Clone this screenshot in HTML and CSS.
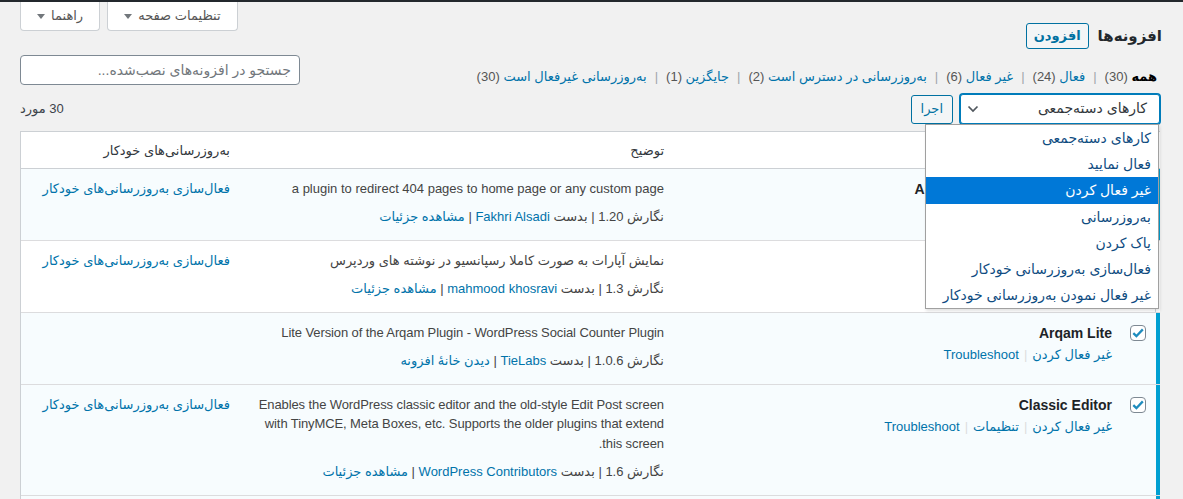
FILE: index.html
```html
<!DOCTYPE html>
<html lang="fa" dir="rtl">
<head>
<meta charset="utf-8">
<title>افزونه‌ها</title>
<link rel="stylesheet" href="styles.css">
</head>
<body>
<div class="adminbar"></div>
<div class="wrap">
  <div class="top">
    <div class="heading">
      <h1 class="title">افزونه‌ها</h1>
      <a class="page-title-action">افزودن</a>
    </div>
    <div class="screen-meta">
      <button class="meta-tab">تنظیمات صفحه <span class="caret"></span></button>
      <button class="meta-tab">راهنما <span class="caret"></span></button>
    </div>
  </div>

  <div class="filters">
    <ul class="subsubsub">
      <li><a class="current">همه <span class="count">(30)</span></a><span class="sep">|</span></li>
      <li><a>فعال <span class="count">(24)</span></a><span class="sep">|</span></li>
      <li><a>غیر فعال <span class="count">(6)</span></a><span class="sep">|</span></li>
      <li><a>به‌روزرسانی در دسترس است <span class="count">(2)</span></a><span class="sep">|</span></li>
      <li><a>جایگزین <span class="count">(1)</span></a><span class="sep">|</span></li>
      <li><a>به‌روزرسانی غیرفعال است <span class="count">(30)</span></a></li>
    </ul>
    <input class="search" type="search" placeholder="جستجو در افزونه‌های نصب‌شده...">
  </div>

  <div class="tablenav">
    <div class="bulk">
      <div class="select-wrap">
        <div class="select">
          <span>کارهای دسته‌جمعی</span>
          <svg class="chev" width="12" height="8" viewBox="0 0 12 8"><path d="M1.5 1.5 L6 6 L10.5 1.5" fill="none" stroke="#50575e" stroke-width="1.7"/></svg>
        </div>
        <ul class="options">
          <li>کارهای دسته‌جمعی</li>
          <li>فعال نمایید</li>
          <li class="hl">غیر فعال کردن</li>
          <li>به‌روزرسانی</li>
          <li>پاک کردن</li>
          <li>فعال‌سازی به‌روزرسانی خودکار</li>
          <li>غیر فعال نمودن به‌روزرسانی خودکار</li>
        </ul>
      </div>
      <button class="apply">اجرا</button>
    </div>
    <div class="num">30 مورد</div>
  </div>

  <div class="table">
    <div class="thead">
      <div class="cb"><span class="check"></span></div>
      <div class="th name-h">افزونه</div>
      <div class="th">توضیح</div>
      <div class="th">به‌روزرسانی‌های خودکار</div>
    </div>

    <div class="tr active">
      <div class="cb"><span class="check on"><svg width="12" height="10" viewBox="0 0 12 10"><path d="M1.3 5.2 L4.4 8.2 L10.8 1.4" fill="none" stroke="#1e8cbe" stroke-width="2.3"/></svg></span></div>
      <div class="name">
        <div class="pname">All 404 Redirect to Homepage</div>
        <div class="actions"><a>غیر فعال کردن</a><span class="rsep">|</span><a>تنظیمات</a></div>
      </div>
      <div class="desc">
        <p>a plugin to redirect 404 pages to home page or any custom page</p>
        <div class="meta">نگارش 1.20 | بدست <a>Fakhri Alsadi</a> | <a>مشاهده جزئیات</a></div>
      </div>
      <div class="auto"><a>فعال‌سازی به‌روزرسانی‌های خودکار</a></div>
    </div>

    <div class="tr">
      <div class="cb"><span class="check"></span></div>
      <div class="name">
        <div class="pname">Aparat Responsive</div>
        <div class="actions"><a>فعال نمایید</a><span class="rsep">|</span><a>پاک کردن</a></div>
      </div>
      <div class="desc">
        <p>نمایش آپارات به صورت کاملا رسپانسیو در نوشته های وردپرس</p>
        <div class="meta">نگارش 1.3 | بدست <a>mahmood khosravi</a> | <a>مشاهده جزئیات</a></div>
      </div>
      <div class="auto"><a>فعال‌سازی به‌روزرسانی‌های خودکار</a></div>
    </div>

    <div class="tr active">
      <div class="cb"><span class="check on"><svg width="12" height="10" viewBox="0 0 12 10"><path d="M1.3 5.2 L4.4 8.2 L10.8 1.4" fill="none" stroke="#1e8cbe" stroke-width="2.3"/></svg></span></div>
      <div class="name">
        <div class="pname">Arqam Lite</div>
        <div class="actions"><a>غیر فعال کردن</a><span class="rsep">|</span><a>Troubleshoot</a></div>
      </div>
      <div class="desc">
        <p class="en">Lite Version of the Arqam Plugin - WordPress Social Counter Plugin</p>
        <div class="meta">نگارش 1.0.6 | بدست <a>TieLabs</a> | <a>دیدن خانهٔ افزونه</a></div>
      </div>
      <div class="auto"></div>
    </div>

    <div class="tr active">
      <div class="cb"><span class="check on"><svg width="12" height="10" viewBox="0 0 12 10"><path d="M1.3 5.2 L4.4 8.2 L10.8 1.4" fill="none" stroke="#1e8cbe" stroke-width="2.3"/></svg></span></div>
      <div class="name">
        <div class="pname">Classic Editor</div>
        <div class="actions"><a>غیر فعال کردن</a><span class="rsep">|</span><a>تنظیمات</a><span class="rsep">|</span><a>Troubleshoot</a></div>
      </div>
      <div class="desc">
        <p class="en">Enables the WordPress classic editor and the old-style Edit Post screen with TinyMCE, Meta Boxes, etc. Supports the older plugins that extend this screen.</p>
        <div class="meta">نگارش 1.6 | بدست <a>WordPress Contributors</a> | <a>مشاهده جزئیات</a></div>
      </div>
      <div class="auto"><a>فعال‌سازی به‌روزرسانی‌های خودکار</a></div>
    </div>

    <div class="tr active">
      <div class="cb"><span class="check on"><svg width="12" height="10" viewBox="0 0 12 10"><path d="M1.3 5.2 L4.4 8.2 L10.8 1.4" fill="none" stroke="#1e8cbe" stroke-width="2.3"/></svg></span></div>
      <div class="name">
        <div class="pname">Contact Form 7</div>
        <div class="actions"><a>تنظیمات</a><span class="rsep">|</span><a>غیر فعال کردن</a></div>
      </div>
      <div class="desc">
        <p>Just another contact form plugin. Simple but flexible.</p>
        <div class="meta">نگارش 5.2.2 | بدست <a>Takayuki Miyoshi</a> | <a>مشاهده جزئیات</a></div>
      </div>
      <div class="auto"><a>فعال‌سازی به‌روزرسانی‌های خودکار</a></div>
    </div>
  </div>
</div>
</body>
</html>
```

FILE: styles.css
```css
* { box-sizing: border-box; }
html, body { margin: 0; padding: 0; }
body {
  direction: rtl;
  background: #f1f1f1;
  font-family: "Liberation Sans", "DejaVu Sans", sans-serif;
  font-size: 13px;
  line-height: 1.4;
  color: #444;
  width: 1183px;
  height: 499px;
  overflow: hidden;
}
a { color: #0073aa; text-decoration: none; }

.adminbar { height: 2px; background: #23282d; }
.wrap { padding: 0 23px 0 20px; }

.top {
  display: flex;
  justify-content: space-between;
  align-items: flex-start;
  height: 47px;
}
.heading {
  display: flex;
  align-items: center;
  gap: 9px;
  margin-top: 21px;
  margin-right: -2px;
}
.title {
  margin: 0;
  font-size: 15px;
  font-weight: 700;
  line-height: 26px;
  color: #23282d;
}
.page-title-action {
  display: flex;
  align-items: center;
  height: 26px;
  padding: 0 7px;
  border: 1px solid #0071a1;
  border-radius: 3px;
  background: #f3f5f6;
  color: #0071a1;
  font-weight: 700;
  font-size: 13px;
}
.screen-meta { display: flex; gap: 7px; }
.meta-tab {
  height: 29px;
  display: flex;
  align-items: center;
  gap: 6px;
  padding: 0 16px;
  border: 1px solid #ccd0d4;
  border-top: 0;
  border-radius: 0 0 4px 4px;
  background: #fff;
  color: #555;
  font: inherit;
  font-size: 13px;
}
.caret {
  width: 0; height: 0;
  border-left: 4px solid transparent;
  border-right: 4px solid transparent;
  border-top: 5px solid #72777c;
}

.filters {
  display: flex;
  justify-content: space-between;
  align-items: flex-start;
  margin-top: 6px;
  height: 30px;
}
.subsubsub {
  list-style: none;
  margin: 0 3px 0 0;
  padding: 12px 0 0;
  display: flex;
  line-height: 20px;
  color: #666;
}
.subsubsub .current { color: #000; font-weight: 700; }
.subsubsub .count { color: #555; font-weight: 400; }
.sep { color: #a0a5aa; margin: 0 8px; }
.search {
  width: 280px;
  height: 30px;
  margin: 0;
  padding: 0 8px;
  border: 1px solid #7e8993;
  border-radius: 4px;
  background: #fff;
  font: inherit;
  font-size: 14px;
  color: #32373c;
  direction: rtl;
}
.search::placeholder { color: #72777c; }

.tablenav {
  display: flex;
  justify-content: space-between;
  align-items: center;
  margin-top: 9px;
  height: 30px;
}
.bulk { display: flex; align-items: center; gap: 7px; }
.select-wrap { position: relative; }
.select {
  width: 200px;
  height: 30px;
  display: flex;
  align-items: center;
  justify-content: space-between;
  padding: 0 12px 0 6px;
  border: 1px solid #007cba;
  box-shadow: 0 0 0 1px #007cba;
  border-radius: 3px;
  background: #fff;
  font-size: 14px;
  color: #32373c;
}
.chev { display: block; }
.options {
  position: absolute;
  top: 30px;
  right: 1px;
  width: 234px;
  margin: 0;
  padding: 0;
  list-style: none;
  background: #fff;
  border: 1px solid #a0a0a0;
  box-shadow: 1px 2px 3px rgba(0,0,0,.12);
  z-index: 10;
  font-size: 14px;
  color: #0f4c81;
}
.options li {
  height: 26.2px;
  line-height: 26px;
  padding: 0 7px;
  white-space: nowrap;
}
.options li.hl { background: #0078d7; color: #fff; }
.apply {
  height: 29px;
  padding: 0 9px;
  border: 1px solid #0071a1;
  border-radius: 3px;
  background: #f3f5f6;
  color: #0071a1;
  font: inherit;
  font-size: 13px;
}
.num { color: #3c434a; }

.table {
  margin-top: 7px;
  width: 1140px;
  border: 1px solid #ccd0d4;
  border-right: 0;
  background: #fff;
}
.thead, .tr {
  display: grid;
  grid-template-columns: 40px 446px 434px 1fr;
}
.thead {
  height: 37px;
  border-bottom: 1px solid #ccd0d4;
  color: #32373c;
}
.thead .cb { box-shadow: inset -1px 0 #ccd0d4; padding-top: 10px; }
.th { padding: 9px 10px 0; line-height: 20px; }
.name-h { padding-right: 8px; }

.tr {
  background: #fff;
  border-bottom: 1px solid #dcdcde;
}
.tr.active { background: #f7fcfe; }
.cb {
  padding: 12px 10px 0 0;
  border-right: 4px solid transparent;
}
.tr:not(.active) .cb { box-shadow: inset -1px 0 #ccd0d4; }
.tr.active .cb { border-right-color: #00a0d2; }
.check {
  width: 16px;
  height: 16px;
  display: flex;
  align-items: center;
  justify-content: center;
  border: 1px solid #7e8993;
  border-radius: 4px;
  background: #fff;
}
.check svg { display: block; }

.name { padding: 10px 8px 0 10px; }
.pname {
  font-size: 14px;
  font-weight: 700;
  line-height: 20px;
  color: #1d2327;
}
.actions { margin-top: 2px; line-height: 20px; }
.rsep { color: #ddd; margin: 0 5px; }

.desc { padding: 9.5px 10px 14px; }
.desc p { margin: 0; line-height: 19.5px; }
.desc p.en { letter-spacing: -0.1px; }
.meta { margin-top: 8.5px; line-height: 19.5px; }
.auto { padding: 9.5px 10px 0; line-height: 19.5px; }
```
